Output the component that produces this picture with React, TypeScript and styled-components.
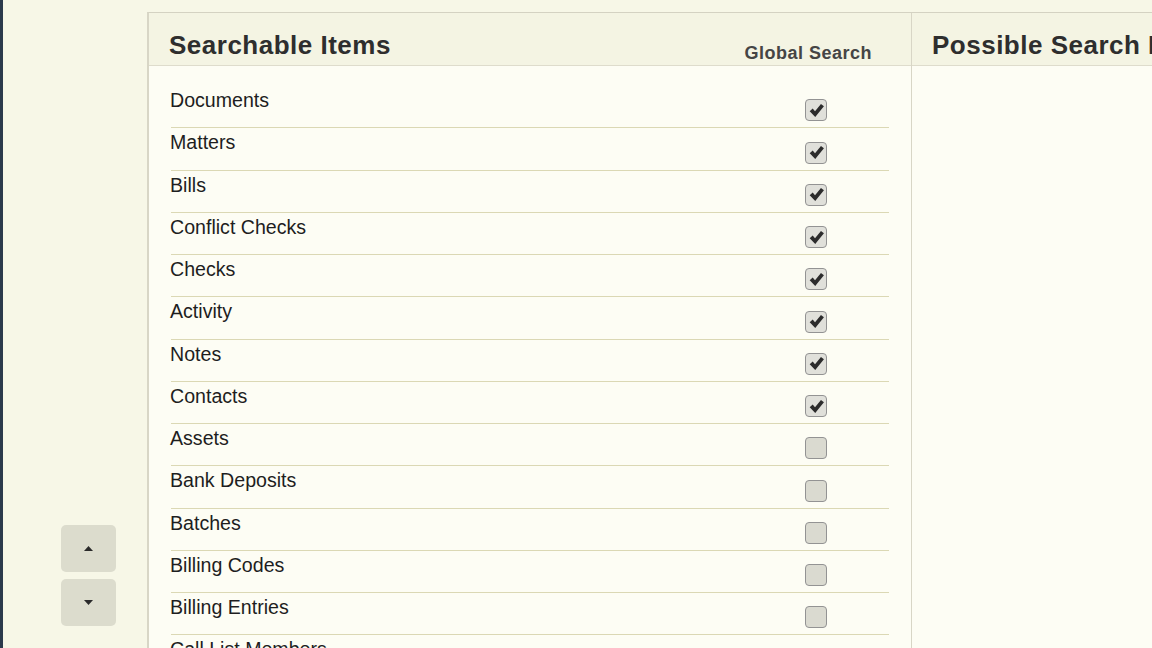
import React from 'react';
import styled, { createGlobalStyle } from 'styled-components';

const GlobalStyle = createGlobalStyle`
    html, body {
        margin: 0;
        padding: 0;
        height: 648px;
        overflow: hidden;
        background: #f7f7e7;
        font-family: 'Liberation Sans', Arial, sans-serif;
    }
`;

const Page = styled.div`
    display: flex;
    height: 648px;
    border-left: 3px solid #2b3a4c;
    box-sizing: border-box;
`;

const Sidebar = styled.div`
    width: 144px;
    flex: none;
    display: flex;
    flex-direction: column;
    justify-content: flex-end;
    align-items: flex-start;
    gap: 7px;
    padding: 0 0 22px 58px;
    box-sizing: border-box;
`;

const ArrowButton = styled.button`
    width: 55px;
    height: 47px;
    border: none;
    border-radius: 5px;
    background: #dcdccd;
    display: flex;
    align-items: center;
    justify-content: center;
    padding: 0;
    cursor: pointer;
`;

const Panel = styled.div`
    margin-top: 12px;
    display: flex;
    border-top: 1px solid #d4d2c2;
    border-left: 2px solid #d8d6c6;
    align-self: flex-start;
`;

const Column = styled.div<{ width: number }>`
    width: ${props => props.width}px;
    flex: none;
    border-right: 1px solid #d8d6c6;
`;

const Header = styled.div`
    height: 52px;
    display: flex;
    align-items: flex-end;
    justify-content: space-between;
    padding: 0 39px 0 20px;
    background: #f4f4e3;
    border-bottom: 1px solid #dedccc;
`;

const Title = styled.h2`
    margin: 0 0 4px;
    font-size: 26px;
    letter-spacing: 0.5px;
    font-weight: bold;
    color: #2e2e2e;
    white-space: nowrap;
`;

const SubTitle = styled.span`
    margin-bottom: 1px;
    font-size: 18px;
    letter-spacing: 0.5px;
    font-weight: bold;
    color: #454545;
`;

const Body = styled.div`
    background: #fdfdf4;
    padding: 20px 22px 0;
    height: 600px;
`;

const Row = styled.div`
    display: grid;
    grid-template-columns: 1fr 144px;
    height: 41.25px;
    border-bottom: 1px solid #dbd8b4;
`;

const Label = styled.span`
    font-size: 19.6px;
    line-height: 24px;
    padding: 2px 0 0 0;
    margin-left: -1px;
    color: #1e1e1e;
`;

const Box = styled.span<{ checked: boolean }>`
    justify-self: center;
    align-self: end;
    margin: 0 2px 6px 0;
    width: 20px;
    height: 20px;
    border: 1px solid #939393;
    border-radius: 4px;
    background: ${props => (props.checked ? '#e0e0da' : '#dadad0')};
    display: flex;
    align-items: center;
    justify-content: center;
`;

const items: [string, boolean][] = [
    ['Documents', true],
    ['Matters', true],
    ['Bills', true],
    ['Conflict Checks', true],
    ['Checks', true],
    ['Activity', true],
    ['Notes', true],
    ['Contacts', true],
    ['Assets', false],
    ['Bank Deposits', false],
    ['Batches', false],
    ['Billing Codes', false],
    ['Billing Entries', false],
    ['Call List Members', false],
];

const Check = () => (
    <svg width="17" height="17" viewBox="0 0 16 16">
        <path d="M1.6 8.6 L4.4 6.2 L6.6 8.8 L12.2 1.8 L15 4 L6.8 14 Z" fill="#2c2c2c" />
    </svg>
);

const Triangle = ({ up }: { up?: boolean }) => (
    <svg width="9" height="5" viewBox="0 0 9 5">
        <path d={up ? 'M0 5 L4.5 0 L9 5 Z' : 'M0 0 L9 0 L4.5 5 Z'} fill="#2a2a2a" />
    </svg>
);

const App = () => (
    <>
        <GlobalStyle />
        <Page>
            <Sidebar>
                <ArrowButton aria-label="Move up">
                    <Triangle up />
                </ArrowButton>
                <ArrowButton aria-label="Move down">
                    <Triangle />
                </ArrowButton>
            </Sidebar>
            <Panel>
                <Column width={762}>
                    <Header>
                        <Title>Searchable Items</Title>
                        <SubTitle>Global Search</SubTitle>
                    </Header>
                    <Body>
                        {items.map(([name, checked]) => (
                            <Row key={name}>
                                <Label>{name}</Label>
                                <Box checked={checked}>{checked && <Check />}</Box>
                            </Row>
                        ))}
                    </Body>
                </Column>
                <Column width={420}>
                    <Header>
                        <Title>Possible Search Items</Title>
                    </Header>
                    <Body />
                </Column>
            </Panel>
        </Page>
    </>
);

export default App;
